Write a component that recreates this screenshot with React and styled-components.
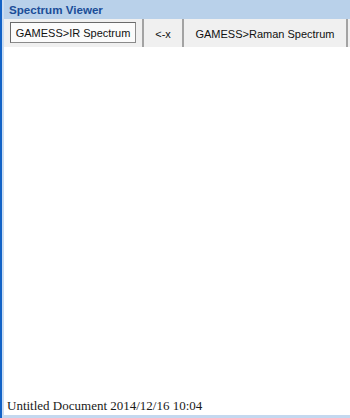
import styled, { createGlobalStyle } from "styled-components";

const Global = createGlobalStyle`
    html, body {
        margin: 0;
        padding: 0;
        background: #ffffff;
    }
    #root {
        height: 100vh;
    }
`

const Frame = styled.div`
    height: 418px;
    box-sizing: border-box;
    border-left: 2px solid #1262c6;
    display: flex;
    flex-direction: column;
`

const Inner = styled.div`
    flex: 1;
    display: flex;
    flex-direction: column;
    border-left: 2px solid #c9dcf2;
    border-bottom: 3px solid #c4d8ef;
    min-height: 0;
`

const Header = styled.div`
    height: 19px;
    line-height: 20px;
    background-color: #b9d1ea;
    padding-left: 5px;
    font-family: "Liberation Sans", Arial, sans-serif;
    font-size: 11.6px;
    font-weight: 700;
    color: #1b4d98;
`

const TabBar = styled.div`
    height: 28px;
    display: flex;
    background-color: #f0f0f0;
    font-family: "Liberation Sans", Arial, sans-serif;
    font-size: 11px;
    color: #111;
`

const Tab = styled.div`
    width: ${props => props.w}px;
    box-sizing: border-box;
    border-right: 2px solid #a3a3a3;
    display: flex;
    align-items: ${props => props.selected ? "flex-start" : "center"};
    justify-content: ${props => props.selected ? "flex-start" : "center"};
    padding: ${props => props.selected ? "3px 0 0 6px" : "1px 0 0 0"};
    white-space: nowrap;
`

const TabBox = styled.div`
    width: 126px;
    height: 21px;
    box-sizing: border-box;
    border: 1px solid #8a8a8a;
    border-top-color: #6a6a6a;
    border-left-color: #6a6a6a;
    background-color: #fbfbfb;
    display: flex;
    align-items: center;
    justify-content: center;
    padding-top: 1px;
`

const Spacer = styled.div`
    flex: 1;
`

const Content = styled.div`
    flex: 1;
    background: #ffffff;
`

const Footer = styled.div`
    font-family: "Liberation Serif", "Times New Roman", serif;
    font-size: 13px;
    line-height: 15px;
    color: #1a1a1a;
    padding: 0 0 2px 3px;
`

export default function App() {
    return (
        <>
            <Global />
            <Frame>
                <Inner>
                    <Header>Spectrum Viewer</Header>
                    <TabBar>
                        <Tab w={140} selected>
                            <TabBox>GAMESS&gt;IR Spectrum</TabBox>
                        </Tab>
                        <Tab w={40}>&lt;-x</Tab>
                        <Tab w={164}>GAMESS&gt;Raman Spectrum</Tab>
                        <Spacer />
                    </TabBar>
                    <Content />
                    <Footer>Untitled Document 2014/12/16 10:04</Footer>
                </Inner>
            </Frame>
        </>
    )
}
